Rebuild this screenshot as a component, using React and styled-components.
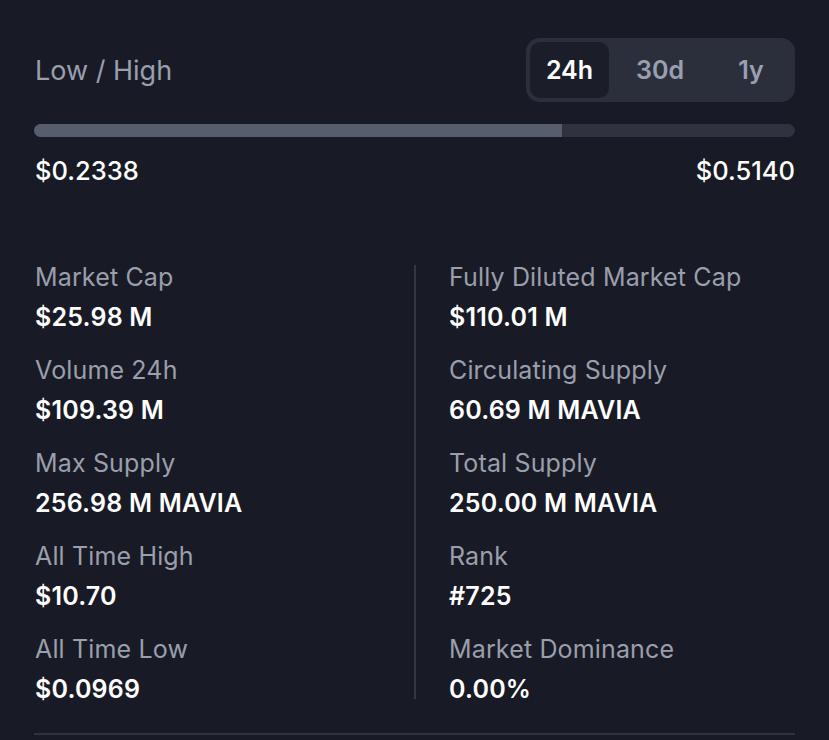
import React, { useState } from "react";
import styled, { createGlobalStyle } from "styled-components";

const stats = [
  ["Market Cap", "$25.98 M", "Fully Diluted Market Cap", "$110.01 M"],
  ["Volume 24h", "$109.39 M", "Circulating Supply", "60.69 M MAVIA"],
  ["Max Supply", "256.98 M MAVIA", "Total Supply", "250.00 M MAVIA"],
  ["All Time High", "$10.70", "Rank", "#725"],
  ["All Time Low", "$0.0969", "Market Dominance", "0.00%"],
];

export default function App() {
  const [range, setRange] = useState("24h");
  const low = 0.2338;
  const high = 0.514;
  const fill = 69.4; // % of track filled

  return (
    <>
      <GlobalStyle />
      <Panel>
        <Header>
          <Title>Low / High</Title>
          <Tabs>
            {["24h", "30d", "1y"].map((t) => (
              <Tab key={t} active={range === t} onClick={() => setRange(t)}>
                {t}
              </Tab>
            ))}
          </Tabs>
        </Header>
        <Track>
          <Fill style={{ width: `${fill}%` }} />
        </Track>
        <PriceRow>
          <span>${low.toFixed(4)}</span>
          <span>${high.toFixed(4)}</span>
        </PriceRow>
        <StatsGrid>
          <Column>
            {stats.map((s) => (
              <Stat key={s[0]}>
                <Label>{s[0]}</Label>
                <Value>{s[1]}</Value>
              </Stat>
            ))}
          </Column>
          <Divider />
          <Column right>
            {stats.map((s) => (
              <Stat key={s[2]}>
                <Label>{s[2]}</Label>
                <Value>{s[3]}</Value>
              </Stat>
            ))}
          </Column>
        </StatsGrid>
        <BottomRule />
      </Panel>
    </>
  );
}

const GlobalStyle = createGlobalStyle`
  body {
    margin: 0;
    background: #181b25;
    font-family: Inter, "Noto Sans", sans-serif;
  }
`;

const Panel = styled.div`
  padding: 38px 34px 0 34px;
  height: 740px;
  box-sizing: border-box;
  overflow: hidden;
  background: #181b25;
`;

const Header = styled.div`
  display: flex;
  justify-content: space-between;
  align-items: center;
`;

const Title = styled.div`
  font-size: 27px;
  color: #9a9fac;
  padding-left: 1px;
`;

const Tabs = styled.div`
  display: grid;
  grid-template-columns: 79px 102px 1fr;
  width: 269px;
  height: 64px;
  box-sizing: border-box;
  padding: 4px;
  border-radius: 14px;
  background: #2b2f3c;
`;

const Tab = styled.div`
  display: flex;
  align-items: center;
  justify-content: center;
  border-radius: 10px;
  font-size: 25px;
  font-weight: 600;
  color: ${(p) => (p.active ? "#ffffff" : "#9a9fb0")};
  background: ${(p) => (p.active ? "#1b1e28" : "transparent")};
  cursor: pointer;
`;

const Track = styled.div`
  margin-top: 22px;
  height: 13px;
  border-radius: 7px;
  background: #2f3340;
  overflow: hidden;
`;

const Fill = styled.div`
  height: 100%;
  background: #575d6c;
`;

const PriceRow = styled.div`
  display: flex;
  justify-content: space-between;
  margin-top: 19px;
  font-size: 25.5px;
  font-weight: 500;
  line-height: 30px;
  color: #ffffff;
  padding-left: 1px;
`;

const StatsGrid = styled.div`
  display: flex;
  margin-top: 76px;
`;

const Column = styled.div`
  flex: ${(p) => (p.right ? "1" : "0 0 380px")};
  display: flex;
  flex-direction: column;
  gap: 23px;
  box-sizing: border-box;
  padding-left: ${(p) => (p.right ? "33px" : "1px")};
`;

const Divider = styled.div`
  width: 2px;
  margin: 3px 0 5px;
  background: #343844;
`;

const Stat = styled.div`
  display: flex;
  flex-direction: column;
  gap: 10px;
`;

const Label = styled.div`
  font-size: 25px;
  line-height: 30px;
  letter-spacing: 0.15px;
  color: #9a9fac;
`;

const Value = styled.div`
  font-size: 25px;
  line-height: 30px;
  letter-spacing: 0.2px;
  font-weight: 600;
  color: #ffffff;
`;

const BottomRule = styled.div`
  margin-top: 29px;
  height: 2px;
  background: #2f3340;
`;
